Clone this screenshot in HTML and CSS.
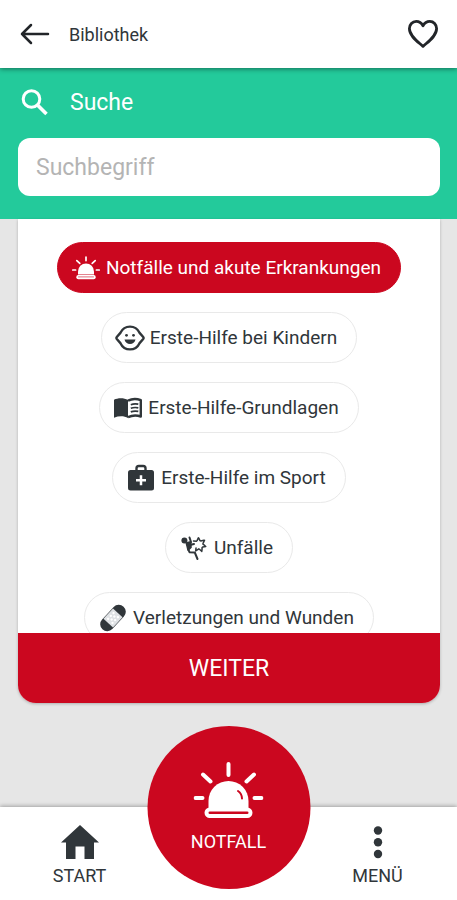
FILE: index.html
```html
<!DOCTYPE html>
<html lang="de">
<head>
<meta charset="utf-8">
<meta name="viewport" content="width=device-width, initial-scale=1">
<title>Bibliothek</title>
<link rel="stylesheet" href="styles.css">
</head>
<body>
<header class="topbar">
  <button class="icon-button" type="button" aria-label="Zurück">
    <svg width="30" height="22" viewBox="0 0 30 22" fill="none" stroke="currentColor" stroke-width="2.5" stroke-linecap="round" stroke-linejoin="round"><path d="M28 11H2M11 2L2 11l9 9"/></svg>
  </button>
  <h1 class="topbar-title">Bibliothek</h1>
  <button class="icon-button" type="button" aria-label="Favorit">
    <svg width="32" height="30" viewBox="0 0 32 30" fill="none" stroke="currentColor" stroke-width="2.8" stroke-linejoin="round"><path d="M16 27.4C11 22.8 2.4 17.2 2.4 9.6 2.4 5.5 5.4 2.4 9.2 2.4c2.700 0 5.300 1.600 6.800 4.300 1.500-2.700 4.100-4.300 6.800-4.300 3.800 0 6.800 3.100 6.800 7.200 0 7.600-8.600 13.200-13.600 17.800z"/></svg>
  </button>
</header>

<search class="search">
  <label class="search-label" for="term">
    <svg width="28" height="28" viewBox="0 0 28 28" fill="none" stroke="currentColor" stroke-width="3"><circle cx="10.500" cy="10" r="8.300"/><path d="M16.200 15.700L25.500 25" stroke-width="3.600"/></svg>
    Suche
  </label>
  <input class="search-input" id="term" type="text" placeholder="Suchbegriff">
</search>

<main class="content">
  <section class="card">
    <div class="topics">
      <button class="chip chip-active" type="button">
        <svg class="chip-icon" viewBox="0 0 30 30" fill="none" stroke="currentColor" stroke-width="1.700" stroke-linecap="round"><path d="M7 21.500v-3a8 8 0 0 1 16 0v3z" fill="currentColor" stroke="none"/><rect x="5.300" y="22" width="19.400" height="4.200" rx="2" fill="currentColor" stroke="none"/><path d="M15 4v3.600M5.800 7.600l3 2.800M24.200 7.600l-3 2.800M1.800 17h2.800M25.400 17h2.800"/><path d="M7.500 23.900h15" stroke="#cb071f" stroke-width=".6"/></svg>
        Notfälle und akute Erkrankungen
      </button>
      <button class="chip" type="button">
        <svg class="chip-icon" viewBox="0 0 30 30" fill="none" stroke="currentColor" stroke-width="2.400" stroke-linejoin="round"><path d="M15 3.600c4.300 0 7.600 2.200 9.400 6L28.200 14q.8 1 0 2l-3.800 4.400c-1.800 3.800-5.100 6-9.400 6s-7.600-2.200-9.400-6L1.800 16q-.8-1 0-2l3.800-4.400c1.800-3.800 5.100-6 9.400-6z"/><g fill="currentColor" stroke="none"><circle cx="11.500" cy="12.300" r="1.400"/><circle cx="18.500" cy="12.300" r="1.400"/><path d="M9.500 16.600h11c-.7 2.900-2.700 4.500-5.500 4.500s-4.800-1.600-5.500-4.500z"/></g></svg>
        Erste-Hilfe bei Kindern
      </button>
      <button class="chip" type="button">
        <svg class="chip-icon" viewBox="0 0 30 30" fill="none" stroke="currentColor"><path d="M1 6.700C5 4.600 11 4.600 15 7v18c-4-2.200-9-2.200-14-.3z" fill="currentColor" stroke="none"/><path d="M15 7.600c4-2 9-2 12.800-.4v16.300c-4-1.400-8.800-1.200-12.800.7" stroke-width="2.400" stroke-linejoin="round"/><path d="M17.800 11.700c2.500-1 5-1 7.500-.5M17.800 15.300c2.500-1 5-1 7.500-.5M17.800 18.900c2.500-1 5-1 7.500-.5" stroke-width="1.700"/></svg>
        Erste-Hilfe-Grundlagen
      </button>
      <button class="chip" type="button">
        <svg class="chip-icon" viewBox="0 0 30 30" fill="none" stroke="currentColor"><rect x="2" y="7" width="26" height="20.500" rx="2.500" fill="currentColor" stroke="none"/><path d="M10.500 8V5.300Q10.500 3 12.800 3h4.400q2.300 0 2.300 2.300V8" stroke-width="2.400"/><path d="M15 12.300v10M10 17.300h10" stroke="#fff" stroke-width="2.500"/></svg>
        Erste-Hilfe im Sport
      </button>
      <button class="chip" type="button">
        <svg class="chip-icon" viewBox="0 0 30 30" fill="none" stroke="currentColor" stroke-width="2" stroke-linecap="round" stroke-linejoin="round"><circle cx="5.400" cy="7.500" r="3" fill="currentColor" stroke="none"/><path d="M7.500 10l4-.7.300 5-2.600 2.500z" fill="currentColor"/><path d="M9 10.500l3-1.500-1.500-4.500M11 12l4-1M9.300 16.500l1.200 2.700 5.300.3 2.700 6.500"/><path d="M14.500 8l3.300.2L19.500 4.500l1.700 3.600 4.400-1-1.800 3.800 3 2.500-3.700.8-.2 4.300-3-2.700-3.200 2.200.4-3.700" stroke-width="1.500" stroke-dasharray="3 1"/></svg>
        Unfälle
      </button>
      <button class="chip" type="button">
        <svg class="chip-icon" viewBox="0 0 30 30"><g transform="rotate(-47 15 15)"><rect x="-.5" y="8" width="31" height="14" rx="7" fill="currentColor"/><rect x="8" y="8.500" width="14" height="13" fill="#dfe2e5"/><g fill="#fff"><circle cx="11" cy="12" r="1.200"/><circle cx="15" cy="12" r="1.200"/><circle cx="19" cy="12" r="1.200"/><circle cx="11" cy="18" r="1.200"/><circle cx="15" cy="18" r="1.200"/><circle cx="19" cy="18" r="1.200"/><circle cx="13" cy="15" r="1.200"/><circle cx="17" cy="15" r="1.200"/></g></g></svg>
        Verletzungen und Wunden
      </button>
    </div>
    <button class="next" type="button">WEITER</button>
  </section>
</main>

<nav class="tabbar">
  <a class="tab" href="#start">
    <svg width="38" height="34" viewBox="0 0 38 34" fill="currentColor"><path d="M19 0L38 17.500H33V34H23.500V21.500h-9V34H5V17.500H0z"/></svg>
    START
  </a>
  <a class="emergency" href="#notfall">
    <svg width="70" height="56" viewBox="0 0 70 56" fill="none" stroke="#fff" stroke-width="4" stroke-linecap="round"><path d="M15 48V39a20 20 0 0 1 40 0v9z" fill="#fff" stroke="none"/><rect x="13" y="47.500" width="44" height="6.500" rx="3.250" fill="#cb071f"/><path d="M35 2v11M9.500 12.500l7.500 7M60.500 12.500l-7.500 7M2 36h7M61 36h7"/><path d="M44.500 29q3.800 2.500 4 7.500" stroke="#cb071f" stroke-width="2"/></svg>
    NOTFALL
  </a>
  <a class="tab tab-last" href="#menue">
    <svg width="38" height="34" viewBox="0 0 38 34" fill="currentColor"><circle cx="19" cy="5.500" r="4.200"/><circle cx="19" cy="17.200" r="4.200"/><circle cx="19" cy="29" r="4.200"/></svg>
    MENÜ
  </a>
</nav>
</body>
</html>
```
FILE: styles.css
```css
* {
  box-sizing: border-box;
}

body {
  display: flex;
  flex-direction: column;
  height: 100vh;
  margin: 0;
  background: #e6e6e6;
  color: #30363a;
  font-family: Roboto, "Liberation Sans", sans-serif;
  font-size: 18px;
}

button,
input {
  font: inherit;
}

button {
  border: 0;
  cursor: pointer;
}

svg {
  display: block;
  flex: none;
}

.topbar {
  position: relative;
  display: flex;
  align-items: center;
  gap: 19px;
  height: 68px;
  padding: 0 18px 0 20px;
  background: #fff;
  box-shadow: 0 1px 5px rgba(0, 0, 0, 0.45);
}

.icon-button {
  padding: 0;
  background: none;
  color: #222529;
}

.topbar-title {
  flex: 1;
  margin: 0;
  font-size: 18px;
  font-weight: 400;
}

.search {
  display: flex;
  flex-direction: column;
  gap: 20px;
  padding: 20px 17px 23px 18px;
  background: #23ca9b;
}

.search-label {
  display: flex;
  align-items: center;
  gap: 21px;
  padding-left: 3px;
  color: #fff;
  font-size: 23px;
  line-height: 30px;
}

.search-input {
  width: 100%;
  height: 58px;
  padding: 0 18px;
  border: 0;
  border-radius: 12px;
  background: #fff;
  color: #30363a;
  font-size: 23px;
}

.search-input::placeholder {
  color: #b4b4b4;
}

.content {
  display: flex;
  flex: 1;
  min-height: 0;
  padding: 0 17px 104px 18px;
}

.card {
  display: flex;
  flex: 1;
  flex-direction: column;
  overflow: hidden;
  border-radius: 0 0 18px 18px;
  background: #fff;
  box-shadow: 0 1px 3px rgba(0, 0, 0, 0.25);
}

.topics {
  display: flex;
  flex: 1;
  flex-direction: column;
  align-items: center;
  gap: 19px;
  min-height: 0;
  padding-top: 23px;
  overflow: hidden;
}

.chip {
  display: flex;
  flex: none;
  align-items: center;
  gap: 5px;
  height: 51px;
  padding: 0 19px 0 13px;
  border: 1px solid #e9e9e9;
  border-radius: 26px;
  background: #fff;
  color: #30363a;
  font-size: 19px;
  white-space: nowrap;
}

.chip-active {
  border-color: #cb071f;
  background: #cb071f;
  color: #fff;
}

.chip-icon {
  width: 30px;
  height: 30px;
}

.next {
  flex: none;
  height: 70px;
  background: #cb071f;
  color: #fff;
  font-size: 23px;
}

.tabbar {
  position: relative;
  display: grid;
  grid-template-columns: repeat(3, 1fr);
  height: 93px;
  padding: 0 5px;
  background: #fff;
  box-shadow: 0 -1px 4px rgba(0, 0, 0, 0.3);
}

.tab,
.emergency {
  display: flex;
  flex-direction: column;
  align-items: center;
  text-decoration: none;
}

.tab {
  gap: 5px;
  padding-top: 18px;
  color: #30363a;
  line-height: 24px;
}

.tab-last {
  grid-column: 3;
}

.emergency {
  position: absolute;
  top: -81px;
  left: 50%;
  gap: 12px;
  width: 163px;
  height: 163px;
  padding-top: 36px;
  border-radius: 50%;
  background: #cb071f;
  color: #fff;
  line-height: 24px;
  transform: translateX(-50%);
}
```
